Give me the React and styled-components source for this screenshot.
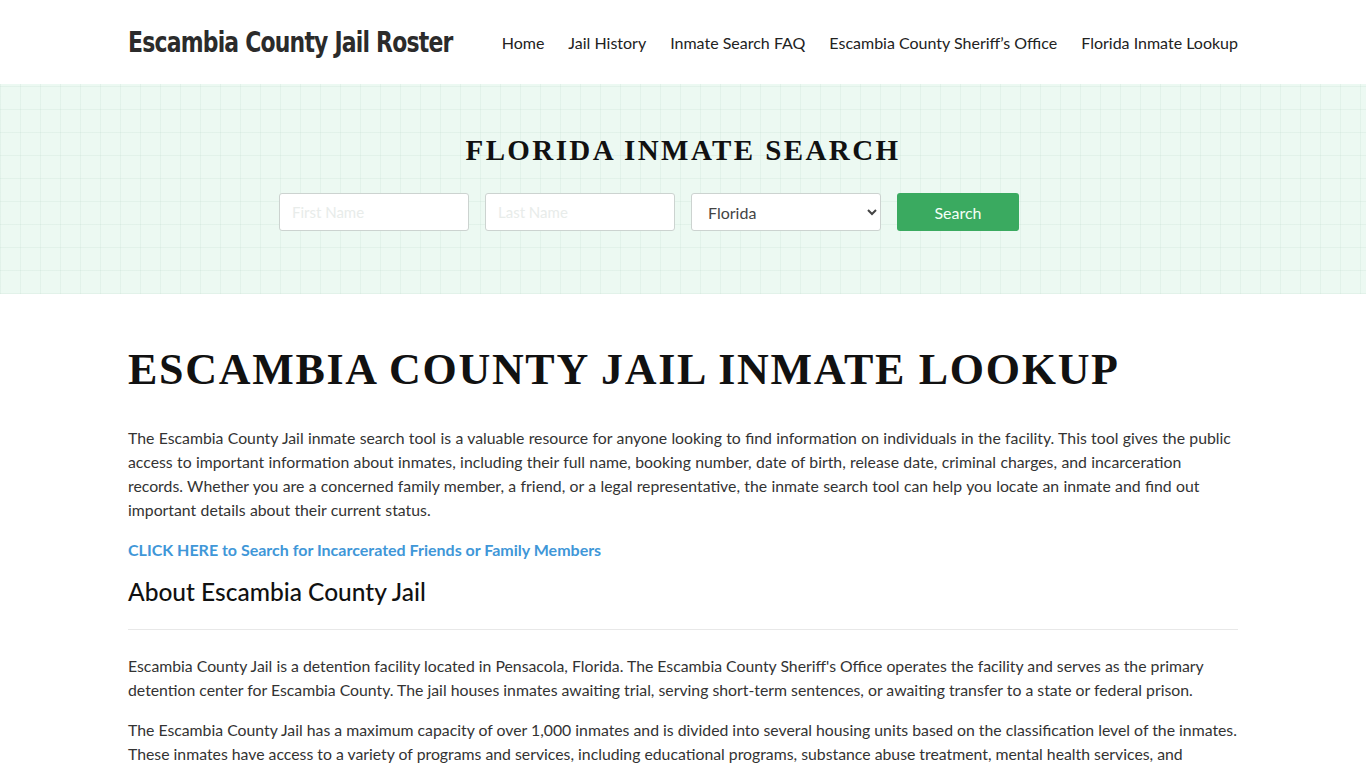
import React from "react";
import styled, { createGlobalStyle } from "styled-components";

const GlobalStyle = createGlobalStyle`
  * { box-sizing: border-box; }
  body {
    margin: 0;
    font-family: Lato, "Open Sans", sans-serif;
    color: #333;
    background: #fff;
  }
`;

const Container = styled.div`
  max-width: 1140px;
  margin: 0 auto;
  padding: 0 15px;
`;

const Header = styled.header`
  height: 84px;
  background: #fff;
`;

const HeaderRow = styled(Container)`
  height: 100%;
  display: flex;
  align-items: center;
  justify-content: space-between;
`;

const Logo = styled.a`
  display: inline-block;
  font-family: "DejaVu Sans", sans-serif;
  font-stretch: condensed;
  font-weight: 700;
  font-size: 28px;
  letter-spacing: -0.9px;
  white-space: nowrap;
  color: #2b2b2b;
  text-decoration: none;
  transform: scaleX(0.87);
  transform-origin: left center;
`;

const Nav = styled.nav`
  display: flex;
  gap: 24px;
  flex-shrink: 0;
`;

const NavLink = styled.a`
  font-size: 16px;
  color: #222;
  white-space: nowrap;
  text-decoration: none;
`;

const Hero = styled.section`
  height: 210px;
  background-color: #ecf9f2;
  background-image:
    repeating-linear-gradient(90deg, rgba(180, 210, 195, 0.18) 0 1px, transparent 1px 20px),
    repeating-linear-gradient(0deg, rgba(180, 210, 195, 0.18) 0 1px, transparent 1px 23px);
  display: flex;
  flex-direction: column;
  align-items: center;
  padding-top: 50px;
`;

const HeroTitle = styled.h2`
  margin: 0 0 26px;
  font-family: "Liberation Serif", "Times New Roman", serif;
  font-weight: 700;
  font-size: 29px;
  letter-spacing: 2.4px;
  color: #111;
`;

const SearchForm = styled.form`
  display: flex;
  gap: 16px;
  margin-right: 68px;
`;

const Field = styled.input`
  width: 190px;
  height: 38px;
  border: 1px solid #ccd3d0;
  border-radius: 3px;
  padding: 0 12px;
  font-family: Lato, sans-serif;
  font-size: 15px;
  background: #fff;
  &::placeholder { color: #e8ecea; }
`;

const Select = styled.select`
  width: 190px;
  height: 38px;
  border: 1px solid #ccd3d0;
  border-radius: 3px;
  padding: 0 12px;
  font-family: Lato, sans-serif;
  font-size: 16px;
  color: #444;
  background: #fff;
`;

const Button = styled.button`
  width: 122px;
  height: 38px;
  border: 0;
  border-radius: 3px;
  background: #3aaa60;
  color: #f4fff7;
  font-family: Lato, sans-serif;
  font-size: 16px;
`;

const Main = styled(Container)`
  padding-top: 52px;
`;

const PageTitle = styled.h1`
  margin: 0 0 32px;
  font-family: "Liberation Serif", "Times New Roman", serif;
  font-weight: 700;
  font-size: 44px;
  letter-spacing: 1.7px;
  color: #111;
  line-height: 1.1;
`;

const Text = styled.p`
  margin: 0 0 16px;
  font-size: 15.8px;
  line-height: 24px;
  color: #333;
  word-spacing: ${(p) => p.$wordSpacing || "normal"};
`;

const LinkText = styled.a`
  display: block;
  margin: 0 0 14px;
  font-size: 16px;
  line-height: 24px;
  font-weight: 700;
  color: #3f97d8;
  text-decoration: none;
`;

const SubTitle = styled.h2`
  margin: 0;
  font-size: 24.5px;
  font-weight: 500;
  color: #111;
  line-height: 32px;
`;

const Rule = styled.hr`
  border: 0;
  border-top: 1px solid #e8e8e8;
  margin: 21px 0 24px;
`;

export default function App() {
  const links = ["Home", "Jail History", "Inmate Search FAQ", "Escambia County Sheriff’s Office", "Florida Inmate Lookup"];
  return (
    <>
      <GlobalStyle />
      <Header>
        <HeaderRow>
          <Logo href="#">Escambia County Jail Roster</Logo>
          <Nav>
            {links.map((l) => (
              <NavLink key={l} href="#">{l}</NavLink>
            ))}
          </Nav>
        </HeaderRow>
      </Header>
      <Hero>
        <HeroTitle>FLORIDA INMATE SEARCH</HeroTitle>
        <SearchForm onSubmit={(e) => e.preventDefault()}>
          <Field placeholder="First Name" />
          <Field placeholder="Last Name" />
          <Select defaultValue="Florida">
            <option>Florida</option>
          </Select>
          <Button type="submit">Search</Button>
        </SearchForm>
      </Hero>
      <Main>
        <PageTitle>ESCAMBIA COUNTY JAIL INMATE LOOKUP</PageTitle>
        <Text $wordSpacing="0.3px">
          The Escambia County Jail inmate search tool is a valuable resource for anyone looking to find information on individuals in the facility. This tool gives the public access to important information about inmates, including their full name, booking number, date of birth, release date, criminal charges, and incarceration records. Whether you are a concerned family member, a friend, or a legal representative, the inmate search tool can help you locate an inmate and find out important details about their current status.
        </Text>
        <LinkText href="#">CLICK HERE to Search for Incarcerated Friends or Family Members</LinkText>
        <SubTitle>About Escambia County Jail</SubTitle>
        <Rule />
        <Text>
          Escambia County Jail is a detention facility located in Pensacola, Florida. The Escambia County Sheriff's Office operates the facility and serves as the primary detention center for Escambia County. The jail houses inmates awaiting trial, serving short-term sentences, or awaiting transfer to a state or federal prison.
        </Text>
        <Text>
          The Escambia County Jail has a maximum capacity of over 1,000 inmates and is divided into several housing units based on the classification level of the inmates. These inmates have access to a variety of programs and services, including educational programs, substance abuse treatment, mental health services, and religious services.
        </Text>
      </Main>
    </>
  );
}
